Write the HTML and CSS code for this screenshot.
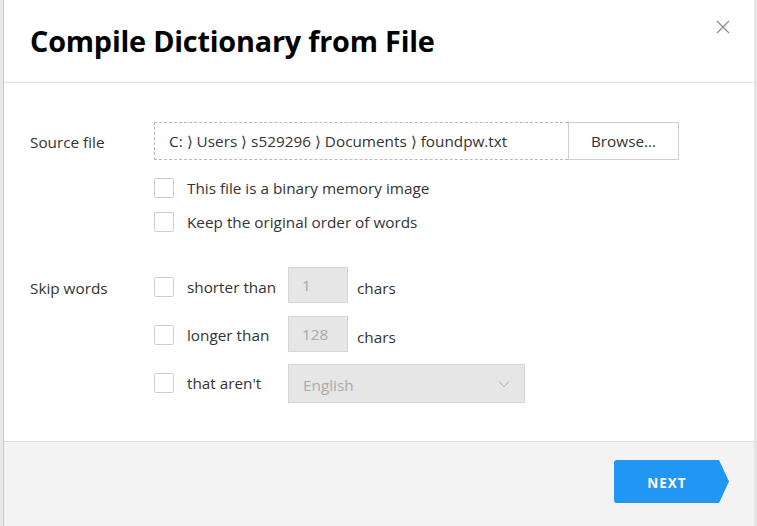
FILE: index.html
```html
<!DOCTYPE html>
<html>
<head>
<meta charset="utf-8">
<link rel="stylesheet" href="styles.css">
</head>
<body>
<div class="backdrop">
  <div class="dialog">
    <div class="header">
      <h1 class="title">Compile Dictionary from File</h1>
      <button class="close" aria-label="Close">
        <svg width="14" height="14" viewBox="0 0 14 14"><path d="M1 1L13 13M13 1L1 13" stroke="#8a8a8a" stroke-width="1.2" fill="none"/></svg>
      </button>
    </div>
    <div class="content">
      <div class="section">
        <div class="label label-source">Source file</div>
        <div class="controls">
          <div class="file-row">
            <div class="file-path">C: ⟩ Users ⟩ s529296 ⟩ Documents ⟩ foundpw.txt</div>
            <button class="browse">Browse...</button>
          </div>
          <label class="check first"><span class="box"></span><span>This file is a binary memory image</span></label>
          <label class="check"><span class="box"></span><span>Keep the original order of words</span></label>
        </div>
      </div>
      <div class="section skip">
        <div class="label label-skip">Skip words</div>
        <div class="controls">
          <div class="opt">
            <label class="check inline"><span class="box"></span><span class="opt-text">shorter than</span></label>
            <div class="num">1</div>
            <span class="unit">chars</span>
          </div>
          <div class="opt">
            <label class="check inline"><span class="box"></span><span class="opt-text">longer than</span></label>
            <div class="num">128</div>
            <span class="unit">chars</span>
          </div>
          <div class="opt">
            <label class="check inline"><span class="box"></span><span class="opt-text">that aren't</span></label>
            <div class="select"><span>English</span>
              <svg width="12" height="8" viewBox="0 0 12 8"><path d="M1 1.5L6 6.5L11 1.5" stroke="#a8a8a8" stroke-width="1" fill="none"/></svg>
            </div>
          </div>
        </div>
      </div>
    </div>
    <div class="footer">
      <button class="next">NEXT</button>
    </div>
  </div>
</div>
</body>
</html>
```
FILE: styles.css
```css
* { box-sizing: border-box; }
html, body { margin: 0; padding: 0; }
body {
  width: 757px;
  height: 526px;
  overflow: hidden;
  background: #e6e6e6;
  font-family: "Open Sans", "Noto Sans", sans-serif;
  color: #333;
}
.backdrop {
  height: 526px;
  padding-left: 4px;
  background: linear-gradient(to right, #e9e9e9 0, #e9e9e9 3px, #c9c9c9 3px, #c9c9c9 4px, transparent 4px),
              linear-gradient(to left, #e4e4e4 0, #e4e4e4 3px, transparent 3px);
}
.dialog {
  width: 750px;
  height: 526px;
  background: #fff;
  display: flex;
  flex-direction: column;
}
.header {
  height: 83px;
  border-bottom: 1px solid #e2e2e2;
  display: flex;
  align-items: center;
  justify-content: space-between;
  padding: 0 24px 0 26px;
  flex: none;
}
.title {
  margin: 0;
  font-size: 28.8px;
  font-weight: 700;
  color: #000;
  letter-spacing: -0.2px;
  position: relative;
  top: -1px;
}
.close {
  border: 0;
  background: none;
  padding: 0;
  width: 14px;
  height: 14px;
  align-self: flex-start;
  margin-top: 20px;
}
.close svg { display: block; }
.content {
  flex: 1;
  padding: 39px 0 0 26px;
}
.section {
  display: flex;
}
.label {
  width: 124px;
  flex: none;
  font-size: 15.3px;
  line-height: 20px;
}
.label-source { padding-top: 10px; }
.label-skip { padding-top: 11px; }
.controls { display: flex; flex-direction: column; }
.file-row {
  display: flex;
  height: 38px;
}
.file-path {
  width: 414px;
  border: 1px dashed #b9b9b9;
  border-right: 0;
  font-size: 15.3px;
  line-height: 36px;
  padding-left: 14px;
  color: #333;
  white-space: nowrap;
  overflow: hidden;
}
.browse {
  width: 111px;
  border: 1px solid #cfcfcf;
  background: #fff;
  font-family: inherit;
  font-size: 15.3px;
  color: #333;
  padding: 0;
}
.check {
  display: flex;
  align-items: center;
  font-size: 15.3px;
  line-height: 20px;
  height: 20px;
}
.check.first { margin-top: 18px; }
.check + .check { margin-top: 14px; }
.box {
  width: 20px;
  height: 20px;
  border: 1px solid #cfcfcf;
  border-radius: 2px;
  background: #fff;
  margin-right: 13px;
  flex: none;
}
.skip { margin-top: 35px; }
.opt {
  display: flex;
  align-items: flex-start;
}
.opt + .opt { margin-top: 13px; }
.opt:last-child { margin-top: 12px; }
.check.inline { width: 134px; margin-top: 9px; }
.opt:first-child .check.inline { margin-top: 10px; }
.num {
  width: 60px;
  height: 36px;
  background: #e6e6e6;
  border: 1px solid #d6d6d6;
  font-size: 15.3px;
  line-height: 34px;
  padding-left: 13px;
  color: #aaa;
}
.unit {
  font-size: 15.3px;
  margin-left: 9px;
  line-height: 20px;
  margin-top: 11px;
}
.select {
  width: 237px;
  height: 39px;
  background: #e6e6e6;
  border: 1px solid #d6d6d6;
  display: flex;
  align-items: center;
  justify-content: space-between;
  padding: 0 14px 0 14px;
  font-size: 15.3px;
  color: #aaa;
}
.select span { position: relative; top: 1px; }
.footer {
  height: 85px;
  flex: none;
  background: #f3f3f3;
  border-top: 1px solid #dcdcdc;
  display: flex;
  justify-content: flex-end;
  padding: 18px 25px 0 0;
}
.next {
  width: 115px;
  height: 43px;
  border: 0;
  border-radius: 3px;
  background: #2196f3;
  color: #fff;
  font-family: inherit;
  font-weight: 700;
  font-size: 13.5px;
  letter-spacing: 1px;
  padding: 2px 9px 0 0;
  clip-path: polygon(0 0, 105px 0, 115px 50%, 105px 100%, 0 100%);
}
```
